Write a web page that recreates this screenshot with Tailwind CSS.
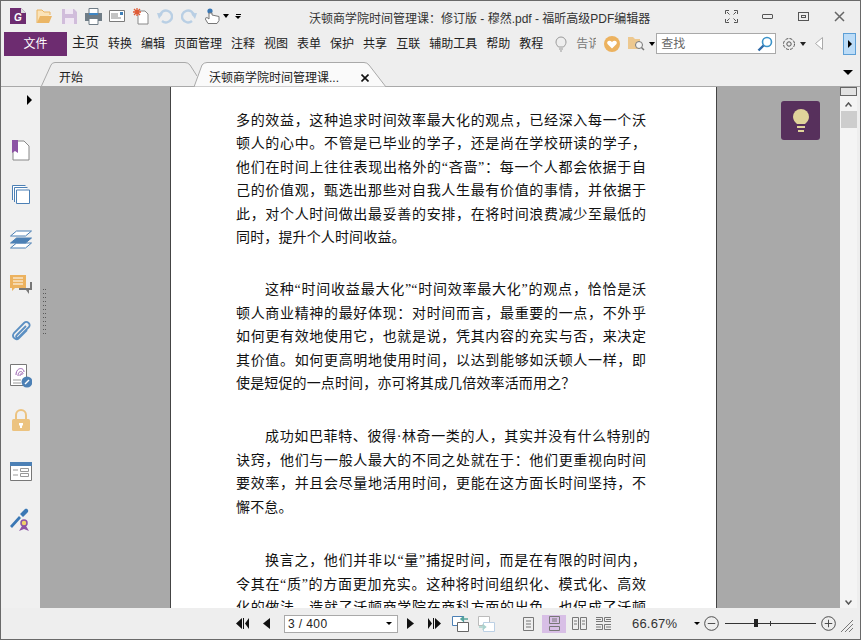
<!DOCTYPE html>
<html lang="zh-CN">
<head>
<meta charset="UTF-8">
<title>沃顿商学院时间管理课</title>
<script src="https://cdn.jsdelivr.net/npm/@tailwindcss/browser@4"></script>
</head>
<body class="w-[861px] h-[640px] overflow-hidden bg-[#eeeeee] font-['Liberation_Sans','Noto_Sans_CJK_SC',sans-serif] text-[#333]">
<div class="w-[861px] h-[640px] flex flex-col border border-[#696969]">

  <!-- title bar -->
  <div class="h-[30px] shrink-0 flex items-center pl-[9px] relative">
    <svg class="w-[17px] h-[17px] shrink-0" viewBox="0 0 17 17"><path d="M0 0h11l5 5v11H0z" fill="#6d2c70"/><path d="M11 0l5 5h-5z" fill="#ddd"/><text x="4" y="13" font-size="10" font-weight="700" font-style="italic" fill="#fff" font-family="Liberation Sans">G</text></svg>
    <svg class="w-[17px] h-[15px] shrink-0 ml-[9px]" viewBox="0 0 17 15"><path d="M1 14V1h5l2 2h6v3" fill="#fbe3b8" stroke="#e9b463"/><path d="M1 14l3-7h12l-3 7z" fill="#ebb666"/></svg>
    <svg class="w-[15px] h-[15px] shrink-0 ml-[9px]" viewBox="0 0 15 15"><path d="M0 0h12l3 3v12H0z" fill="#d1bddb"/><path d="M3 0h8v5H3zM3 9h9v6H3z" fill="#f0e8f3"/></svg>
    <svg class="w-[17px] h-[17px] shrink-0 ml-[8px]" viewBox="0 0 17 17"><path d="M4 .5h9v5H4z" fill="#fff" stroke="#6f7c86"/><path d="M0 5h17v8H0z" fill="#6f7c86"/><path d="M4 5h9v2H4z" fill="#3f86c4"/><path d="M4 10.500h9v6H4z" fill="#fff" stroke="#6f7c86"/></svg>
    <svg class="w-[16px] h-[12px] shrink-0 ml-[7px]" viewBox="0 0 16 12"><path d="M.5.5h15v11H.5z" fill="#fff" stroke="#7b7b7b"/><path d="M11 2h3v3h-3z" fill="#3f7fb8"/><path d="M2 4h7M2 6h7M2 8h10" stroke="#888"/></svg>
    <svg class="w-[16px] h-[17px] shrink-0 ml-[8px]" viewBox="0 0 16 17"><path d="M5 3h7l3 3v10H5z" fill="#fff" stroke="#888"/><path d="M4 0v8M0 4h8M1 1l6 6M7 1L1 7" stroke="#df5a35" stroke-width="1.300"/></svg>
    <svg class="w-[16px] h-[15px] shrink-0 ml-[8px]" viewBox="0 0 16 15"><path d="M3 7a6 6 0 1 1 2 5" fill="none" stroke="#b9cfe4" stroke-width="2.400"/><path d="M0 4l6 .5L2 10z" fill="#b9cfe4"/></svg>
    <svg class="w-[16px] h-[15px] shrink-0 ml-[8px]" viewBox="0 0 16 15"><path d="M13 7a6 6 0 1 0-2 5" fill="none" stroke="#b9cfe4" stroke-width="2.400"/><path d="M16 4l-6 .5L14 10z" fill="#b9cfe4"/></svg>
    <svg class="w-[15px] h-[17px] shrink-0 ml-[8px]" viewBox="0 0 15 17"><circle cx="5" cy="3" r="2.600" fill="#3a78b5"/><path d="M4 5v6L2 9.500 0 10.500 3 15.500h9l2-3v-4l-7-1.500V5z" fill="#fff" stroke="#777"/></svg>
    <span class="ml-[3px] w-0 h-0 border-x-[3px] border-x-transparent border-t-[4px] border-t-black"></span>
    <span class="ml-[6px] flex flex-col items-center gap-[1px]"><span class="w-[5px] h-px bg-black"></span><span class="w-0 h-0 border-x-[3px] border-x-transparent border-t-[3px] border-t-black"></span></span>
    <span class="absolute left-[308px] top-[9px] text-[12px] leading-[18px] whitespace-nowrap">沃顿商学院时间管理课：修订版 - 穆然.pdf - 福昕高级PDF编辑器</span>
    <div class="ml-auto flex items-center pr-[15px]">
      <svg class="w-[13px] h-[13px]" viewBox="0 0 13 13" fill="none" stroke="#555"><path d="M.5 4V.5H4M9 .5h3.500V4M12.500 9v3.500H9M4 12.500H.5V9M2 2l2.500 2.500M11 2L8.500 4.500M11 11L8.500 8.500M2 11l2.500-2.500"/></svg>
      <span class="ml-[24px] w-[11px] h-[5px] border border-[#555] rounded-[1px]"></span>
      <span class="ml-[25px] w-[11px] h-[9px] border border-[#555] flex items-center justify-center"><span class="w-[5px] h-[3px] border border-[#555]"></span></span>
      <svg class="ml-[25px] w-[11px] h-[11px]" viewBox="0 0 11 11" fill="none" stroke="#666" stroke-width="1.500"><path d="M1 1l9 9M10 1l-9 9"/></svg>
    </div>
  </div>

  <!-- menu row -->
  <div class="h-[25px] shrink-0 flex items-center pl-[3px] text-[12px] text-[#222] whitespace-nowrap">
    <span class="w-[63px] h-[24px] shrink-0 bg-[#6d2c70] text-white flex items-center justify-center mr-[5px]">文件</span>
    <div class="flex gap-[9px] items-center shrink-0">
      <span class="text-[13.500px]">主页</span><span>转换</span><span>编辑</span><span>页面管理</span><span>注释</span><span>视图</span><span>表单</span><span>保护</span><span>共享</span><span>互联</span><span>辅助工具</span><span>帮助</span><span>教程</span>
    </div>
    <svg class="ml-[12px] w-[12px] h-[16px] shrink-0" viewBox="0 0 12 16" fill="none" stroke="#999"><path d="M3.500 11C2 9.500 1 8 1 6a5 5 0 0 1 10 0c0 2-1 3.500-2.500 5zM4 13h4M5 15h2"/></svg>
    <span class="ml-[9px] w-[20px] shrink-0 overflow-hidden text-[#777]">告诉</span>
    <svg class="ml-[8px] w-[16px] h-[16px] shrink-0" viewBox="0 0 16 16"><circle cx="8" cy="8" r="8" fill="#ecb25f"/><path d="M8 12.500L3.500 8C2 5.500 5.500 3.500 8 6c2.500-2.500 6-.5 4.500 2z" fill="#fff"/></svg>
    <svg class="ml-[8px] w-[17px] h-[15px] shrink-0" viewBox="0 0 17 15"><path d="M0 1h5l2 2h5v10H0z" fill="#edc88f"/><circle cx="11" cy="9" r="3.500" fill="#f3f3f3" stroke="#777"/><path d="M13.500 11.500L16 14" stroke="#777" stroke-width="1.500"/></svg>
    <span class="ml-[4px] w-0 h-0 border-x-[3px] border-x-transparent border-t-[4px] border-t-black"></span>
    <div class="ml-[1px] w-[120px] h-[21px] shrink-0 bg-white border border-[#a9a9a9] flex items-center pl-[4px] pr-[2px]">
      <span class="text-[#666]">查找</span>
      <svg class="ml-auto w-[16px] h-[16px]" viewBox="0 0 16 16" fill="none"><circle cx="10" cy="6" r="4.500" stroke="#3b93c9" stroke-width="1.600"/><path d="M6.500 9.500L1.500 14.500" stroke="#2f6aa8" stroke-width="2.400"/></svg>
    </div>
    <svg class="ml-[6px] w-[14px] h-[14px] shrink-0" viewBox="0 0 14 14" fill="none" stroke="#555"><circle cx="7" cy="7" r="2.200"/><circle cx="7" cy="7" r="5.500" stroke-dasharray="3 1.300"/></svg>
    <span class="ml-[4px] w-0 h-0 border-x-[3px] border-x-transparent border-t-[4px] border-t-[#222]"></span>
    <svg class="ml-[9px] w-[8px] h-[13px] shrink-0" viewBox="0 0 8 13" fill="#fff" stroke="#aaa"><path d="M7.500.5v12L.5 6.500z"/></svg>
    <span class="ml-[20px] w-[13px] h-[22px] shrink-0 bg-[#bcdcf7] border border-[#5d9fd6] flex items-center justify-center"><span class="w-0 h-0 border-y-[4px] border-y-transparent border-l-[4px] border-l-black"></span></span>
  </div>

  <!-- tabs -->
  <div class="h-[31px] shrink-0 flex items-end border-b border-[#a9a9a9] relative">
    <div class="relative ml-[40px] w-[156px] h-[24px] flex items-center pt-[8px] text-[12px] text-[#222]">
      <svg class="absolute left-0 top-0 w-[156px] h-[25px]" viewBox="0 0 156 25" fill="none" stroke="#a9a9a9"><path d="M0 25L10 3Q11 .5 14 .5H144Q147 .5 149 3L156 14"/></svg>
      <span class="ml-[18px] relative">开始</span>
    </div>
    <div class="relative -ml-[3px] w-[192px] h-[24px] flex items-center pt-[8px] text-[12px] text-[#222]">
      <svg class="absolute left-0 top-0 w-[192px] h-[25px]" viewBox="0 0 192 25"><path d="M0 25L8 3Q10 .5 13 .5H170Q173 .5 175 3L192 25z" fill="#fafafa" stroke="#a9a9a9"/></svg>
      <span class="relative ml-[15px] whitespace-nowrap">沃顿商学院时间管理课...</span>
      <svg class="relative ml-[22px] w-[8px] h-[8px]" viewBox="0 0 8 8" stroke="#111" stroke-width="1.600"><path d="M.5.5l7 7M7.500.5l-7 7"/></svg>
    </div>
    <span class="absolute right-[7px] top-[14px] w-0 h-0 border-x-[5px] border-x-transparent border-t-[5px] border-t-black"></span>
  </div>

  <!-- main -->
  <div class="flex-1 min-h-0 flex">
    <div class="w-[39px] shrink-0 bg-[#f0f0f0] flex flex-col items-center relative">
      <span class="absolute left-[26px] top-[8px] w-0 h-0 border-y-[5px] border-y-transparent border-l-[5px] border-l-black"></span>
      <div class="mt-[53px] flex flex-col items-center">
        <svg class="w-[18px] h-[21px]" viewBox="0 0 18 21"><path d="M1 1h11l5 5v14H1z" fill="#fff" stroke="#888"/><path d="M0 0h6v13l-3-2-3 2z" fill="#8d54a5"/></svg>
        <svg class="mt-[24px] w-[18px] h-[19px]" viewBox="0 0 18 19" fill="#fff" stroke="#4c80b5"><path d="M.5 15V.5h13"/><path d="M2.500 17V2.500h13"/><path d="M4.500 5h13v13.500h-13z"/></svg>
        <svg class="mt-[26px] w-[22px] h-[19px]" viewBox="0 0 22 19" stroke="#4c80b5" fill="#fff"><path d="M.5 18h15L21.500 13h-15z"/><path d="M.5 13h15L21.500 8h-15z" fill="#4c80b5"/><path d="M.5 6h15L21.500 1h-15z"/></svg>
        <svg class="mt-[26px] w-[22px] h-[22px]" viewBox="0 0 22 22"><path d="M0 0h16v13H5l-3 3v-3H0z" fill="#ecb25f"/><path d="M3 3h10M3 6h10M3 9h10" stroke="#fff"/><path d="M20 7h2v8h-3v4l-3-4H9v-2h11z" fill="#777"/></svg>
        <svg class="mt-[23px] w-[20px] h-[21px]" viewBox="0 0 20 21" fill="none" stroke="#5b8fc2" stroke-width="1.800"><path d="M15 6l-9 9c-2 2 0 4 2 2L18 7c2-3-2-7-5-4L3 13c-3 4 2 8 5 5l8-8"/></svg>
        <svg class="mt-[23px] w-[22px] h-[24px]" viewBox="0 0 22 24"><path d="M.5.500h16v21H.5z" fill="#fff" stroke="#777"/><path d="M6 11c0-8 8-8 8-3M8 12c0-6 5-5 5-2M10 12c0-3 2-3 2-1" fill="none" stroke="#9b62b1"/><path d="M3 16h8M3 19h8" stroke="#999"/><circle cx="17" cy="18" r="5.500" fill="#4c80b5"/><path d="M15 20l4-4" stroke="#fff" stroke-width="1.500"/></svg>
        <svg class="mt-[21px] w-[18px] h-[22px]" viewBox="0 0 18 22"><path d="M4 10V6a5 5 0 0 1 10 0v4" fill="none" stroke="#ecc380" stroke-width="2"/><rect y="10" width="18" height="12" rx="1.500" fill="#ecc380"/><path d="M7 14h4v2l-1 1v2H8v-2l-1-1z" fill="#fff"/></svg>
        <svg class="mt-[31px] w-[22px] h-[19px]" viewBox="0 0 22 19"><path d="M.5.500h21v18H.5z" fill="#fff" stroke="#777"/><path d="M0 0h22v4H0z" fill="#4c80b5"/><path d="M3 8h5M3 13h5" stroke="#999"/><path d="M10.500 6.500h8v3h-8zM10.500 11.500h8v3h-8z" fill="#fff" stroke="#999"/></svg>
        <svg class="mt-[27px] w-[21px] h-[23px]" viewBox="0 0 21 23"><path d="M0 18l9-10 2 2-9 10zM10 6l5-5c2-1 4 1 3 3l-5 5z" fill="#3a78b5"/><circle cx="14" cy="15" r="3" fill="#f0d36a" stroke="#8d54a5" stroke-width="1.500"/><path d="M12 18l-3 5 5-2 5 2-3-5z" fill="#8d54a5"/></svg>
      </div>
    </div>

    <div class="flex-1 min-w-0 bg-[#a9a9a9] pl-[130px] relative">
      <svg class="absolute left-[3px] top-[202px] w-[3px] h-[45px]" viewBox="0 0 3 45" fill="#5a5a5a"><path d="M0 0h1v1H0zM2 0h1v1H2zM0 4h1v1H0zM2 4h1v1H2zM0 8h1v1H0zM2 8h1v1H2zM0 12h1v1H0zM2 12h1v1H2zM0 16h1v1H0zM2 16h1v1H2zM0 20h1v1H0zM2 20h1v1H2zM0 24h1v1H0zM2 24h1v1H2zM0 28h1v1H0zM2 28h1v1H2zM0 32h1v1H0zM2 32h1v1H2zM0 36h1v1H0zM2 36h1v1H2zM0 40h1v1H0zM2 40h1v1H2zM0 44h1v1H0zM2 44h1v1H2z"/></svg>
      <div class="w-[547px] h-full overflow-hidden bg-white border-x border-[#444] pl-[65px] pt-[22px] text-[14px] leading-[23.400px] text-[#111] font-['Liberation_Serif','Noto_Sans_CJK_SC',serif]">
        <div class="w-[410px] mb-[29px] text-justify [text-align-last:justify]">
          <p>多的效益，这种追求时间效率最大化的观点，已经深入每一个沃</p>
          <p>顿人的心中。不管是已毕业的学子，还是尚在学校研读的学子，</p>
          <p>他们在时间上往往表现出格外的“吝啬”：每一个人都会依据于自</p>
          <p>己的价值观，甄选出那些对自我人生最有价值的事情，并依据于</p>
          <p>此，对个人时间做出最妥善的安排，在将时间浪费减少至最低的</p>
          <p class="[text-align-last:left] tracking-[.14px]">同时，提升个人时间收益。</p>
        </div>
        <div class="w-[410px] mb-[30px] text-justify [text-align-last:justify]">
          <p class="pl-[29px]">这种“时间收益最大化”“时间效率最大化”的观点，恰恰是沃</p>
          <p>顿人商业精神的最好体现：对时间而言，最重要的一点，不外乎</p>
          <p>如何更有效地使用它，也就是说，凭其内容的充实与否，来决定</p>
          <p>其价值。如何更高明地使用时间，以达到能够如沃顿人一样，即</p>
          <p class="[text-align-last:left] tracking-[.14px]">使是短促的一点时间，亦可将其成几倍效率活而用之？</p>
        </div>
        <div class="w-[414px] mb-[30px] text-justify [text-align-last:justify]">
          <p class="pl-[29px]">成功如巴菲特、彼得·林奇一类的人，其实并没有什么特别的</p>
          <p class="w-[410px]">诀窍，他们与一般人最大的不同之处就在于：他们更重视向时间</p>
          <p class="w-[410px]">要效率，并且会尽量地活用时间，更能在这方面长时间坚持，不</p>
          <p class="[text-align-last:left] tracking-[.14px]">懈不怠。</p>
        </div>
        <div class="w-[410px] text-justify [text-align-last:justify]">
          <p class="pl-[29px]">换言之，他们并非以“量”捕捉时间，而是在有限的时间内，</p>
          <p>令其在“质”的方面更加充实。这种将时间组织化、模式化、高效</p>
          <p>化的做法，造就了沃顿商学院在商科方面的出色，也促成了沃顿</p>
        </div>
      </div>
      <div class="absolute left-[741px] top-[14px] w-[39px] h-[39px] rounded-[3px] bg-[#57305c] flex items-center justify-center">
        <svg class="w-[16px] h-[24px]" viewBox="0 0 16 24" fill="#e0d49a"><path d="M4 15C2 13 0 11 0 8a8 8 0 0 1 16 0c0 3-2 5-4 7z"/><path d="M4 17h8v2H4zM5 21h6v2H5z"/></svg>
      </div>
    </div>

    <div class="w-[17px] shrink-0 bg-[#f4f4f4] flex flex-col items-center">
      <span class="w-[17px] h-[9px] bg-[#e2e2e2] border border-[#666]"></span>
      <svg class="mt-[6px] w-[7px] h-[5px]" viewBox="0 0 7 5" fill="none" stroke="#555" stroke-width="1.500"><path d="M.5 4.500L3.500 1l3 3.500"/></svg>
      <span class="mt-[4px] w-[16px] h-[17px] bg-[#cdcdcd]"></span>
      <svg class="mt-auto mb-[3px] w-[7px] h-[5px]" viewBox="0 0 7 5" fill="none" stroke="#555" stroke-width="1.500"><path d="M.5.5L3.500 4l3-3.500"/></svg>
    </div>
    <div class="w-[3px] shrink-0 bg-[#eeeeee]"></div>
  </div>

  <!-- status bar -->
  <div class="h-[31px] shrink-0 flex items-center text-[#222]">
    <svg class="ml-[235px] w-[13px] h-[11px]" viewBox="0 0 13 11" fill="#111"><path d="M0 5.500L6 0v11zM7 0h1v11H7zM13 0v11L9 5.500z"/></svg>
    <svg class="ml-[14px] w-[7px] h-[11px]" viewBox="0 0 7 11" fill="#111"><path d="M0 5.500L7 0v11z"/></svg>
    <div class="ml-[14px] w-[114px] h-[18px] bg-white border border-[#a9a9a9] flex items-center px-[3px] text-[12px] tracking-[.4px]">3 / 400<span class="ml-auto mr-[2px] w-0 h-0 border-x-[3px] border-x-transparent border-t-[3px] border-t-black"></span></div>
    <svg class="ml-[9px] w-[7px] h-[11px]" viewBox="0 0 7 11" fill="#111"><path d="M7 5.500L0 0v11z"/></svg>
    <svg class="ml-[14px] w-[13px] h-[11px]" viewBox="0 0 13 11" fill="#111"><path d="M0 0v11L4 5.500zM5 0h1v11H5zM7 0v11l6-5.500z"/></svg>
    <svg class="ml-[11px] w-[17px] h-[16px]" viewBox="0 0 17 16" fill="#fff"><path d="M.5.500h11v9H.5z" stroke="#4c80b5"/><path d="M5.500 6.500h11v9h-11z" stroke="#666"/><path d="M16 3H10M12 .5L9 3l3 2.500" stroke="#55a59a" fill="none" stroke-width="1.500"/></svg>
    <svg class="ml-[9px] w-[17px] h-[16px]" viewBox="0 0 17 16" fill="#fff"><path d="M.5.500h11v9H.5z" stroke="#bbb"/><path d="M5.500 6.500h11v9h-11z" stroke="#bcd0e4"/><path d="M1 11h6M4.500 8.500L7.500 11l-3 2.500" stroke="#a9d2cc" fill="none" stroke-width="1.500"/></svg>
    <svg class="ml-[28px] w-[11px] h-[14px]" viewBox="0 0 11 14" fill="none" stroke="#777"><path d="M.5.500h10v13H.5zM3 4h5M3 7h5M3 10h5"/></svg>
    <span class="ml-[8px] w-[24px] h-[18px] bg-[#d8bfe6] flex items-center justify-center"><svg class="w-[11px] h-[15px]" viewBox="0 0 11 15" fill="none" stroke="#777"><path d="M.5.500h10v7H.5zM.5 10.500h10v4H.5zM3 3h5M3 5h5"/></svg></span>
    <svg class="ml-[6px] w-[15px] h-[13px]" viewBox="0 0 15 13" fill="none" stroke="#777"><path d="M.5.500h6v12h-6zM8.500.500h6v12h-6zM2 4h3M2 7h3M10 4h3M10 7h3"/></svg>
    <svg class="ml-[9px] w-[15px] h-[15px]" viewBox="0 0 15 15" fill="none" stroke="#777"><path d="M0 1.500h6.500v4H0M15 1.500H8.500v4H15M0 8.500h6.500v5H0M15 8.500H8.500v5H15M0 3.500h5M10 3.500h5M0 11h5M10 11h5"/></svg>
    <span class="ml-[21px] text-[13px] tracking-[.2px] text-[#333]">66.67%</span>
    <span class="ml-[17px] w-0 h-0 border-x-[3px] border-x-transparent border-t-[3px] border-t-black"></span>
    <svg class="ml-[4px] w-[15px] h-[15px]" viewBox="0 0 16 16" fill="none" stroke="#444"><circle cx="8" cy="8" r="7.300"/><path d="M4 8h8"/></svg>
    <div class="ml-[6px] w-[91px] h-[1px] bg-[#333] relative"><span class="absolute left-[29px] -top-[4px] w-[4px] h-[8px] bg-[#222]"></span><span class="absolute left-[45px] -top-[2px] w-px h-[5px] bg-[#333]"></span></div>
    <svg class="ml-[5px] w-[15px] h-[15px]" viewBox="0 0 16 16" fill="none" stroke="#444"><circle cx="8" cy="8" r="7.300"/><path d="M4 8h8M8 4v8"/></svg>
    <svg class="ml-[5px] mt-[4px] w-[12px] h-[12px]" viewBox="0 0 12 12" fill="none" stroke="#777"><path d="M0 12L12 0M4 12l8-8M8 12l4-4"/></svg>
  </div>
</div>
</body>
</html>
